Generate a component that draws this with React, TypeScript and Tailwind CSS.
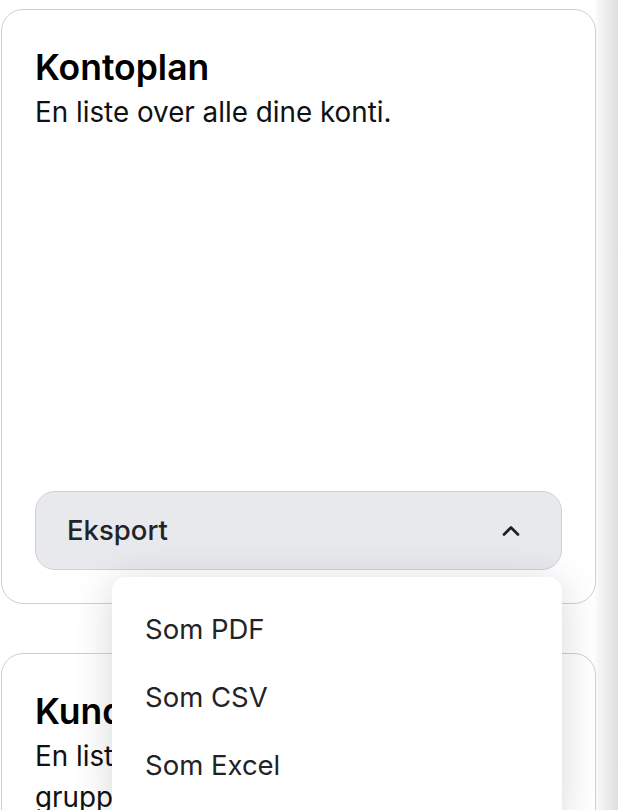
import { ChevronUp } from "lucide-react";

const exportOptions = ["Som PDF", "Som CSV", "Som Excel"];

function Card({ title, description, children }: { title: string; description: string; children?: React.ReactNode }) {
	return (
		<div className="rounded-[22px] border border-[#cdd0d5] bg-white px-[33px] pt-[34px] pb-[33px]">
			<h2 className="text-[35.5px] leading-[48px] font-semibold text-black">{title}</h2>
			<p className="text-[27.8px] leading-[41px] text-[#111111]">{description}</p>
			{children}
		</div>
	);
}

export default function App() {
	return (
		<div
			className="h-[810px] w-[618px] overflow-hidden bg-[linear-gradient(to_right,#ffffff_594px,#f4f4f4_600px,#dedede_618px)] pt-[9px] pl-px pr-[22px] font-['Inter',sans-serif]"
		>
			<div className="flex flex-col gap-[49px]">
				<Card title="Kontoplan" description="En liste over alle dine konti.">
					<div className="relative mt-[358px]">
						<button className="flex h-[79px] w-full items-center justify-between rounded-[20px] border border-[#cfd1d6] bg-[#e8e9ed] pl-[31px] pr-[36px] text-[27.5px] font-medium text-[#222326]">
							<span>Eksport</span>
							<ChevronUp className="h-[28px] w-[28px] text-[#1f2023]" strokeWidth={2.3} />
						</button>
						<div className="absolute top-[86px] left-[77px] right-0 z-10 flex flex-col rounded-[14px] bg-white pt-[18px] pb-[20px] shadow-[0_6px_40px_rgba(0,0,0,0.16)]">
							{exportOptions.map((option) => (
								<div key={option} className="px-[33px] py-[17px] text-[27.5px] leading-[34px] text-[#222326]">
									{option}
								</div>
							))}
						</div>
					</div>
				</Card>
				<Card
					title="Kunder"
					description="En liste over alle kunder, sortert og gruppert etter type."
				/>
			</div>
		</div>
	);
}
